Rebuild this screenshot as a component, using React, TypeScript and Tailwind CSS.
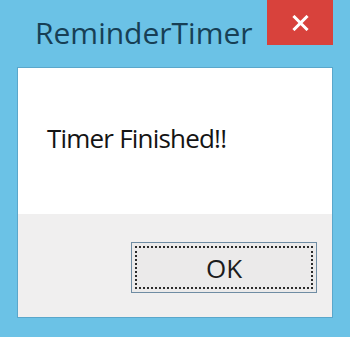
export default function App() {
  return (
    <div className="w-[350px] h-[337px] bg-[#6bc2e6] flex flex-col font-['Open_Sans',sans-serif] overflow-hidden">
      {/* title bar */}
      <div className="h-[67px] flex items-start justify-between pl-[35px] pr-[17px]">
        <span className="mt-[18px] text-[30px] leading-none text-[#173f55]">ReminderTimer</span>
        <button className="w-[66px] h-[45px] bg-[#d8423c] flex items-center justify-center">
          <svg width="19" height="16" viewBox="0 0 19 16">
            <path d="M3.5 2 L15.5 14 M15.5 2 L3.5 14" stroke="#fff" strokeWidth="3" strokeLinecap="square" />
          </svg>
        </button>
      </div>

      {/* client area */}
      <div className="mx-[17px] h-[251px] flex flex-col border border-[#5aa7cb]">
        <div className="h-[146px] bg-white pt-[57px] pl-[29px]">
          <p className="text-[26px] leading-none tracking-[-0.8px] text-[#141414]">Timer Finished!!</p>
        </div>
        <div className="flex-1 bg-[#f0efef] flex justify-end items-start pt-[28px] pr-[15px]">
          <button className="w-[186px] h-[51px] bg-[#ebeaea] border border-[#6f8ca3] p-[3px] flex">
            <span className="flex-1 border-2 border-dotted border-[#2b2b2b] flex items-center justify-center text-[26px] leading-none text-[#1c1c1c]">
              OK
            </span>
          </button>
        </div>
      </div>
    </div>
  );
}
